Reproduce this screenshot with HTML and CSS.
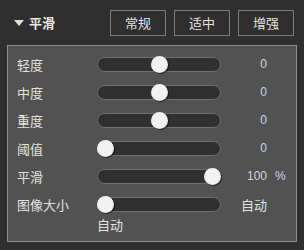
FILE: index.html
```html
<!DOCTYPE html>
<html lang="zh-CN">
<head>
    <meta charset="UTF-8">
    <title>平滑</title>
    <link rel="stylesheet" href="styles.css">
</head>
<body>
    <header class="head">
        <div class="title"><span class="caret"></span>平滑</div>
        <div class="presets">
            <button class="preset">常规</button>
            <button class="preset">适中</button>
            <button class="preset">增强</button>
        </div>
    </header>

    <section class="panel">
        <div class="row">
            <span class="label">轻度</span>
            <div class="track"><span class="thumb" style="--p:0.5"></span></div>
            <span class="value">0</span>
            <span class="unit"></span>
        </div>
        <div class="row">
            <span class="label">中度</span>
            <div class="track"><span class="thumb" style="--p:0.5"></span></div>
            <span class="value">0</span>
            <span class="unit"></span>
        </div>
        <div class="row">
            <span class="label">重度</span>
            <div class="track"><span class="thumb" style="--p:0.5"></span></div>
            <span class="value">0</span>
            <span class="unit"></span>
        </div>
        <div class="row">
            <span class="label">阈值</span>
            <div class="track"><span class="thumb" style="--p:0"></span></div>
            <span class="value">0</span>
            <span class="unit"></span>
        </div>
        <div class="row">
            <span class="label">平滑</span>
            <div class="track"><span class="thumb" style="--p:1"></span></div>
            <span class="value">100</span>
            <span class="unit">%</span>
        </div>
        <div class="row">
            <span class="label">图像大小</span>
            <div class="track"><span class="thumb" style="--p:0"></span></div>
            <span class="value text">自动</span>
            <span class="unit"></span>
        </div>
        <div class="sub">自动</div>
    </section>
</body>
</html>
```

FILE: styles.css
```css
body {
    margin: 0;
    background-color: #2f2f2f;
    color: #e2e2e2;
    font-family: "Liberation Sans", "Noto Sans CJK SC", sans-serif;
    font-size: 13px;
    width: 304px;
    height: 250px;
    overflow: hidden;
}

.head {
    display: flex;
    align-items: center;
    justify-content: space-between;
    height: 45px;
    padding: 0 10px 0 14px;
    box-sizing: border-box;
}
.title {
    display: flex;
    align-items: center;
    gap: 5px;
    font-weight: bold;
    font-size: 13px;
    color: #e8e8e8;
    margin-top: 0px;
}
.caret {
    width: 0;
    height: 0;
    border-left: 5.5px solid transparent;
    border-right: 5.5px solid transparent;
    border-top: 6px solid #e0e0e0;
}
.presets {
    display: flex;
    gap: 8px;
    margin-top: 0px;
}
.preset {
    width: 56px;
    height: 26px;
    padding: 0;
    background-color: #2f2f2f;
    color: #e2e2e2;
    border: 1px solid #7c7c7c;
    font-family: inherit;
    font-size: 13px;
}

.panel {
    margin: 0 7px;
    height: 197px;
    box-sizing: border-box;
    border: 1px solid #8e8e8e;
    background-color: #525252;
    padding: 4px 0 0 9px;
}
.row {
    display: grid;
    grid-template-columns: 80px 124px 46px 1fr;
    align-items: center;
    height: 28px;
}
.track {
    position: relative;
    height: 15px;
    box-sizing: border-box;
    border: 1px solid #6e6e6e;
    border-radius: 8px;
    background-color: #303030;
}
.thumb {
    position: absolute;
    top: -2px;
    left: calc(var(--p) * (100% - 15px) - 1px);
    width: 17px;
    height: 17px;
    border-radius: 50%;
    background-color: #f2f2f2;
    box-shadow: 1px 1px 1px rgba(0,0,0,0.55);
}
.value {
    text-align: right;
    color: #c9d6e4;
    font-size: 12px;
}
.value.text {
    color: #e2e2e2;
    font-size: 13px;
}
.unit {
    padding-left: 8px;
    color: #c9d6e4;
    font-size: 12px;
}
.sub {
    padding-left: 80px;
    line-height: 16px;
}
```
